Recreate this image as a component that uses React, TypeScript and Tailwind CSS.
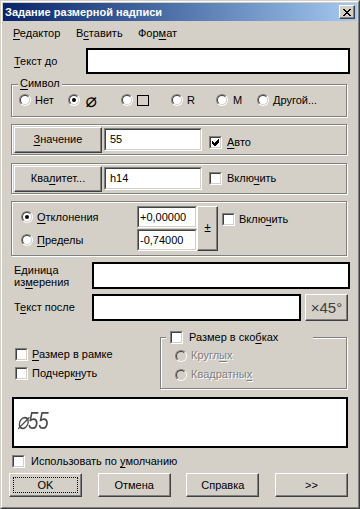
import React from "react";

const U = ({ children }: { children: React.ReactNode }) => (
  <span className="underline underline-offset-[2px] decoration-1">{children}</span>
);

const Checkbox = ({ checked = false }: { checked?: boolean }) => (
  <div className="w-[13px] h-[13px] shrink-0 border border-t-[#808080] border-l-[#808080] border-r-white border-b-white">
    <div className="w-full h-full border border-t-[#404040] border-l-[#404040] border-r-[#d4d0c8] border-b-[#d4d0c8] bg-white flex items-center justify-center">
      {checked && (
        <svg width="7" height="7" viewBox="0 0 7 7" shapeRendering="crispEdges">
          <path d="M0 2 L2 4 L6 0 L7 0 L7 3 L3 7 L2 7 L0 5 Z" fill="black" />
        </svg>
      )}
    </div>
  </div>
);

const Radio = ({ checked = false, disabled = false }: { checked?: boolean; disabled?: boolean }) => (
  <div className="w-[12px] h-[12px] shrink-0 rounded-full border border-t-[#808080] border-l-[#808080] border-r-white border-b-white">
    <div
      className={`w-full h-full rounded-full border border-t-[#404040] border-l-[#404040] border-r-[#d4d0c8] border-b-[#d4d0c8] flex items-center justify-center ${
        disabled ? "bg-[#d4d0c8]" : "bg-white"
      }`}
    >
      {checked && <div className="w-[4px] h-[4px] rounded-full bg-black" />}
    </div>
  </div>
);

const Btn = ({ className = "", children }: { className?: string; children?: React.ReactNode }) => (
  <div
    className={`relative shrink-0 flex items-center justify-center bg-[#d4d0c8] border border-t-white border-l-white border-r-[#404040] border-b-[#404040] shadow-[inset_-1px_-1px_0_#808080] ${className}`}
  >
    {children}
  </div>
);

const Edit = ({ className = "", children }: { className?: string; children?: React.ReactNode }) => (
  <div className={`shrink-0 border border-t-[#808080] border-l-[#808080] border-r-white border-b-white ${className}`}>
    <div className="w-full h-full border border-t-[#404040] border-l-[#404040] border-r-[#d4d0c8] border-b-[#d4d0c8] bg-white flex items-center">
      {children}
    </div>
  </div>
);

const etched = "border border-[#808080] shadow-[inset_1px_1px_0_#fff,1px_1px_0_#fff]";

const XIcon = () => {
  const px: [number, number][] = [
    [0, 0], [1, 0], [6, 0], [7, 0],
    [1, 1], [2, 1], [5, 1], [6, 1],
    [2, 2], [3, 2], [4, 2], [5, 2],
    [3, 3], [4, 3],
    [2, 4], [3, 4], [4, 4], [5, 4],
    [1, 5], [2, 5], [5, 5], [6, 5],
    [0, 6], [1, 6], [6, 6], [7, 6],
  ];
  return (
    <svg width="8" height="7" viewBox="0 0 8 7" shapeRendering="crispEdges">
      {px.map(([x, y], i) => (
        <rect key={i} x={x} y={y} width="1" height="1" fill="black" />
      ))}
    </svg>
  );
};

export default function App() {
  return (
    <div className="w-[360px] h-[509px] overflow-hidden bg-[#d4d0c8] text-[11px] leading-[13px] text-black font-['Liberation_Sans',Arial,sans-serif] border border-t-[#d4d0c8] border-l-[#d4d0c8] border-r-[#404040] border-b-[#404040]">
      <div className="h-full border border-t-white border-l-white border-r-[#808080] border-b-[#808080] p-[1px] flex flex-col">
        {/* Title bar */}
        <div className="h-[18px] shrink-0 flex items-center justify-between bg-linear-to-r from-[#0a246a] to-[#a6caf0] pl-[2px] pr-[2px]">
          <span className="font-bold text-white">Задание размерной надписи</span>
          <Btn className="w-[16px] h-[14px]">
            <XIcon />
          </Btn>
        </div>

        {/* Menu */}
        <div className="h-[25px] shrink-0 flex items-center pl-[10px]">
          <span className="w-[63px]">
            <U>Р</U>едактор
          </span>
          <span className="w-[62px]">
            В<U>с</U>тавить
          </span>
          <span>
            Фор<U>м</U>ат
          </span>
        </div>

        {/* Body */}
        <div className="flex flex-col px-[7px]">
          {/* Текст до */}
          <div className="mt-[2px] h-[26px] flex items-center">
            <span className="w-[76px] pl-[4px] shrink-0">
              <U>Т</U>екст до
            </span>
            <div className="flex-1 h-full border-2 border-black bg-white" />
          </div>

          {/* Символ */}
          <div className={`relative mt-[10px] ml-[1px] mr-[3px] h-[33px] pl-[7px] pt-[8px] ${etched}`}>
            <span className="absolute left-[6px] top-[-8px] px-[2px] bg-[#d4d0c8]">
              <U>С</U>имвол
            </span>
            <div className="flex items-center h-[14px]">
              <div className="w-[49px] flex items-center">
                <Radio />
                <span className="ml-[4px]">Нет</span>
              </div>
              <div className="w-[53px] flex items-center">
                <Radio checked />
                <span className="ml-[5px] italic text-[19px] leading-[14px] font-['DejaVu_Sans',sans-serif]">⌀</span>
              </div>
              <div className="w-[50px] flex items-center">
                <Radio />
                <span className="ml-[4px] w-[12px] h-[11px] border border-black" />
              </div>
              <div className="w-[45px] flex items-center">
                <Radio />
                <span className="ml-[4px]">R</span>
              </div>
              <div className="w-[41px] flex items-center">
                <Radio />
                <span className="ml-[5px]">M</span>
              </div>
              <div className="flex items-center">
                <Radio />
                <span className="ml-[4px]">Другой...</span>
              </div>
            </div>
          </div>

          {/* Значение */}
          <div className={`mt-[7px] ml-[1px] mr-[3px] h-[31px] flex items-center pl-[2px] ${etched}`}>
            <Btn className="w-[88px] h-[26px]">
              <span>
                <U>З</U>начение
              </span>
            </Btn>
            <Edit className="ml-[2px] w-[98px] h-[23px]">
              <span className="pl-[4px]">55</span>
            </Edit>
            <div className="ml-[7px] mt-[6px] flex items-center">
              <Checkbox checked />
              <span className="ml-[5px]">
                <U>А</U>вто
              </span>
            </div>
          </div>

          {/* Квалитет */}
          <div className={`mt-[8px] ml-[1px] mr-[3px] h-[31px] flex items-center pl-[2px] ${etched}`}>
            <Btn className="w-[88px] h-[26px]">
              <span>
                Ква<U>л</U>итет...
              </span>
            </Btn>
            <Edit className="ml-[2px] w-[98px] h-[23px]">
              <span className="pl-[4px]">h14</span>
            </Edit>
            <div className="ml-[7px] flex items-center">
              <Checkbox />
              <span className="ml-[5px]">
                Вклю<U>ч</U>ить
              </span>
            </div>
          </div>

          {/* Отклонения */}
          <div className={`mt-[7px] ml-[1px] mr-[3px] h-[55px] flex items-start pt-[4px] ${etched}`}>
            <div className="w-[125px] shrink-0 pl-[9px] flex flex-col gap-[1px]">
              <div className="h-[22px] flex items-center">
                <Radio checked />
                <span className="ml-[4px]">
                  <U>О</U>тклонения
                </span>
              </div>
              <div className="h-[22px] flex items-center">
                <Radio />
                <span className="ml-[4px]">
                  <U>П</U>ределы
                </span>
              </div>
            </div>
            <div className="w-[60px] shrink-0 flex flex-col gap-[1px]">
              <Edit className="w-full h-[22px]">
                <span className="pl-[1px]">+0,00000</span>
              </Edit>
              <Edit className="w-full h-[22px]">
                <span className="pl-[1px]">-0,74000</span>
              </Edit>
            </div>
            <Btn className="w-[21px] h-[45px]">
              <span className="text-[12px]">±</span>
            </Btn>
            <div className="ml-[4px] mt-[7px] flex items-center h-[13px]">
              <Checkbox />
              <span className="ml-[4px]">
                Вклю<U>ч</U>ить
              </span>
            </div>
          </div>

          {/* Единица измерения */}
          <div className="mt-[6px] h-[27px] flex items-center">
            <div className="w-[82px] shrink-0 pl-[4px] leading-[12px]">
              Единица
              <br />
              из<U>м</U>ерения
            </div>
            <div className="flex-1 h-full border-2 border-black bg-white" />
          </div>

          {/* Текст после */}
          <div className="mt-[5px] h-[27px] flex items-center pr-[2px]">
            <span className="w-[82px] shrink-0 pl-[4px]">
              Т<U>е</U>кст после
            </span>
            <div className="flex-1 h-full border-2 border-black bg-white" />
            <Btn className="ml-[4px] w-[43px] h-full">
              <span className="text-[15px] leading-[17px] text-[#404040]">×45°</span>
            </Btn>
          </div>

          {/* Checkboxes + bracket group */}
          <div className="mt-[16px] flex items-start">
            <div className="w-[150px] shrink-0 pl-[5px] pt-[11px] flex flex-col gap-[6px]">
              <div className="h-[13px] flex items-center">
                <Checkbox />
                <span className="ml-[4px]">
                  <U>Р</U>азмер в рамке
                </span>
              </div>
              <div className="h-[13px] flex items-center">
                <Checkbox />
                <span className="ml-[4px]">
                  Подчерк<U>н</U>уть
                </span>
              </div>
            </div>
            <div className={`relative w-[187px] h-[52px] pl-[14px] pt-[11px] flex flex-col gap-[6px] ${etched}`}>
              <div className="absolute left-[5px] top-[-7px] w-[147px] h-[13px] pl-[4px] bg-[#d4d0c8] flex items-center">
                <Checkbox />
                <span className="ml-[6px]">
                  Размер в ско<U>б</U>ках
                </span>
              </div>
              <div className="h-[13px] flex items-center">
                <Radio disabled />
                <span className="ml-[4px] text-[#808080] [text-shadow:1px_1px_0_#fff]">
                  Кругл<U>ы</U>х
                </span>
              </div>
              <div className="h-[13px] flex items-center">
                <Radio disabled />
                <span className="ml-[4px] text-[#808080] [text-shadow:1px_1px_0_#fff]">
                  Квадратны<U>х</U>
                </span>
              </div>
            </div>
          </div>

          {/* Preview */}
          <div className="mt-[8px] mx-[2px] h-[51px] border-2 border-black bg-white pl-[3px] pt-[9px]">
            <span className="inline-block origin-left scale-x-[0.78] italic text-[24px] leading-[26px] text-[#4a4a4a] font-['Liberation_Sans',sans-serif] font-light">
              ⌀55
            </span>
          </div>

          {/* Default checkbox */}
          <div className="mt-[7px] ml-[2px] h-[13px] flex items-center">
            <Checkbox />
            <span className="ml-[6px]">
              Использовать по <U>у</U>молчанию
            </span>
          </div>

          {/* Buttons */}
          <div className="mt-[5px] -ml-[1px] w-[339px] flex justify-between">
            <Btn className="w-[73px] h-[24px]">
              <span className="absolute inset-[3px] border border-dotted border-black" />
              <span>OK</span>
            </Btn>
            <Btn className="w-[73px] h-[24px]">Отмена</Btn>
            <Btn className="w-[73px] h-[24px]">Справка</Btn>
            <Btn className="w-[73px] h-[24px]">&gt;&gt;</Btn>
          </div>
        </div>
      </div>
    </div>
  );
}
